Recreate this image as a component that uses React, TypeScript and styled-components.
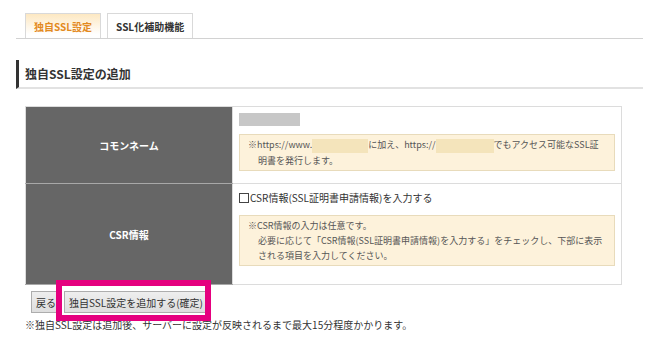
import React from 'react';
import styled, { createGlobalStyle, css } from 'styled-components';

const GlobalStyle = createGlobalStyle`
  html, body {
    margin: 0;
    padding: 0;
    background: #fff;
  }
  body {
    font-family: 'Noto Sans CJK JP', 'Noto Sans', sans-serif;
    color: #333;
  }
`;

// ---------------------------------------------------------------------------
// Styled components
// ---------------------------------------------------------------------------

const Page = styled.div`
  width: 650px;
  height: 359px;
  box-sizing: border-box;
  padding: 13px 7px 0 16px;
  overflow: hidden;
`;

const TabBar = styled.div`
  display: flex;
  align-items: flex-end;
  gap: 6px;
  padding-left: 9px;
  border-bottom: 1px solid #d2d2d2;
`;

const Tab = styled.div<{ $active?: boolean }>`
  height: 25px;
  box-sizing: border-box;
  display: flex;
  align-items: center;
  padding: 0 8px;
  border: 1px solid #d9d9d9;
  border-bottom: none;
  font-size: 10px;
  font-weight: 700;
  color: #333;
  background: #fff;
  ${p => p.$active && css`
    color: #e38a1f;
    background: linear-gradient(#fde8c2, #fff 85%);
  `}
`;

const Heading = styled.h2`
  margin: 21px 0 0;
  height: 29px;
  box-sizing: border-box;
  display: flex;
  align-items: center;
  padding-left: 6px;
  border-left: 3px solid #333;
  border-bottom: 2px solid #e2e2e2;
  font-size: 12px;
  font-weight: 700;
  color: #333;
`;

const FormTable = styled.table`
  margin: 17px 0 0 9px;
  width: 597px;
  border-collapse: collapse;
  border: 1px solid #dcdcdc;
`;

const Label = styled.th<{ $h: number }>`
  width: 207px;
  height: ${p => p.$h}px;
  padding: 0;
  background: #666;
  color: #fff;
  font-size: 10px;
  font-weight: 700;
  text-align: center;
  border-bottom: 1px solid #a8a8a8;
`;

const Cell = styled.td`
  vertical-align: top;
  padding: 6px 6px 0;
  border: 1px solid #dcdcdc;
`;

const Placeholder = styled.div`
  width: 61px;
  height: 13px;
  background: #c7c7c7;
`;

const Note = styled.div<{ $mt: number }>`
  margin-top: ${p => p.$mt}px;
  width: 376px;
  box-sizing: border-box;
  padding: 2px 8px 2px 18px;
  background: #fdf2db;
  border: 1px solid #e8dbbb;
  font-size: 9px;
  line-height: 15px;
  color: #555;
`;

const NoteLine = styled.span<{ $first?: boolean }>`
  display: block;
  white-space: nowrap;
  margin-left: ${p => (p.$first ? -10 : 0)}px;
`;

const Blank = styled.span<{ $w: number }>`
  display: inline-block;
  width: ${p => p.$w}px;
  height: 14px;
  vertical-align: middle;
  background: #f4e4bb;
`;

const CheckRow = styled.label`
  display: flex;
  align-items: center;
  margin-top: 0;
  font-size: 10px;
  line-height: 15px;
  color: #333;
`;

const CheckBox = styled.span`
  width: 10px;
  height: 10px;
  box-sizing: border-box;
  border: 1px solid #444;
  background: #fff;
  margin-right: 1px;
`;

const ButtonRow = styled.div`
  display: flex;
  gap: 3px;
  margin: 6px 0 0 15px;
`;

const Button = styled.button<{ $marked?: boolean }>`
  position: relative;
  height: 22px;
  padding: 0 4px;
  font-family: inherit;
  font-size: 10px;
  color: #333;
  background: linear-gradient(#eee, #dedede);
  border: 1px solid #adadad;
  border-radius: 0;
  ${p => p.$marked && css`
    &::after {
      content: '';
      position: absolute;
      left: -9px;
      top: -12px;
      right: -4px;
      bottom: -9px;
      border: 6px solid #e5007f;
      pointer-events: none;
    }
  `}
`;

const Footnote = styled.p`
  margin: 4px 0 0 9px;
  font-size: 10px;
  line-height: 15px;
  color: #333;
`;

// ---------------------------------------------------------------------------
// Component
// ---------------------------------------------------------------------------

export default function App() {
  return (
    <Page>
      <GlobalStyle />
      <TabBar>
        <Tab $active>独自SSL設定</Tab>
        <Tab>SSL化補助機能</Tab>
      </TabBar>

      <Heading>独自SSL設定の追加</Heading>

      <FormTable>
        <tbody>
          <tr>
            <Label $h={76}>コモンネーム</Label>
            <Cell>
              <Placeholder />
              <Note $mt={8}>
                <NoteLine $first>
                  ※https://www.<Blank $w={56} />に加え、https://<Blank $w={58} />でもアクセス可能なSSL証
                </NoteLine>
                <NoteLine>明書を発行します。</NoteLine>
              </Note>
            </Cell>
          </tr>
          <tr>
            <Label $h={100}>CSR情報</Label>
            <Cell>
              <CheckRow>
                <CheckBox />
                CSR情報(SSL証明書申請情報)を入力する
              </CheckRow>
              <Note $mt={10}>
                <NoteLine $first>※CSR情報の入力は任意です。</NoteLine>
                <NoteLine>必要に応じて「CSR情報(SSL証明書申請情報)を入力する」をチェックし、下部に表示</NoteLine>
                <NoteLine>される項目を入力してください。</NoteLine>
              </Note>
            </Cell>
          </tr>
        </tbody>
      </FormTable>

      <ButtonRow>
        <Button>戻る</Button>
        <Button $marked>独自SSL設定を追加する(確定)</Button>
      </ButtonRow>

      <Footnote>※独自SSL設定は追加後、サーバーに設定が反映されるまで最大15分程度かかります。</Footnote>
    </Page>
  );
}
